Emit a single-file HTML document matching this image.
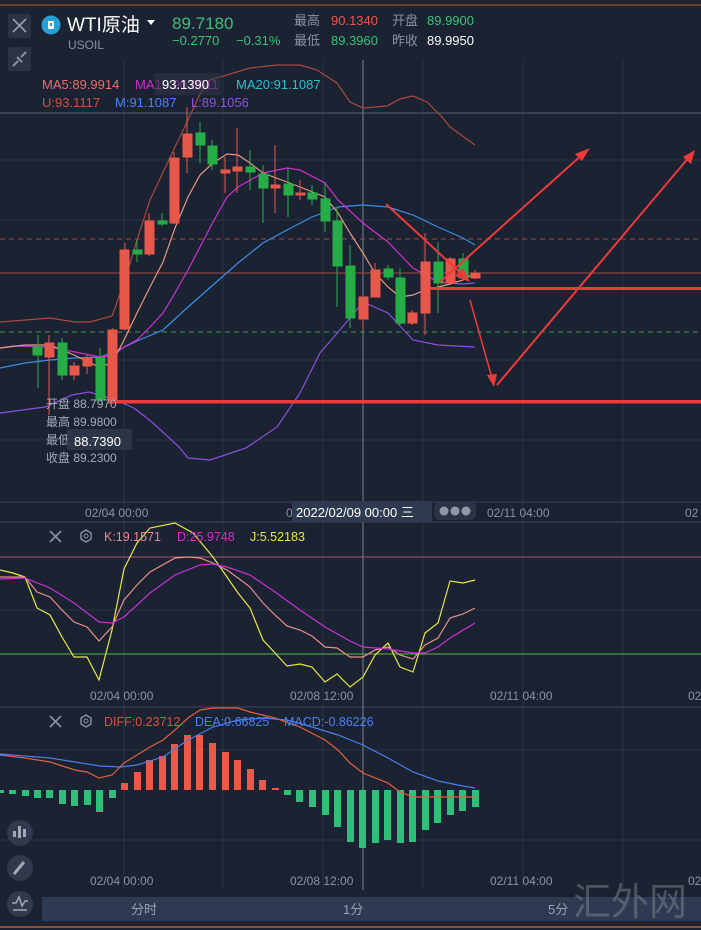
<!DOCTYPE html>
<html><head><meta charset="utf-8"><style>
html,body{margin:0;padding:0;background:#1b2232;}
body{width:701px;height:930px;overflow:hidden;position:relative;font-family:"Liberation Sans","Noto Sans CJK SC",sans-serif;}
svg{position:absolute;left:0;top:0;}
text{font-family:"Liberation Sans","Noto Sans CJK SC",sans-serif;}
</style></head><body>
<svg width="701" height="930" viewBox="0 0 701 930" xmlns="http://www.w3.org/2000/svg">
<rect width="701" height="930" fill="#1b2232"/>
<line x1="0" y1="5" x2="701" y2="5" stroke="#b8602e" stroke-width="1"/>
<line x1="0" y1="927" x2="701" y2="927" stroke="#b8602e" stroke-width="1.5"/>
<g stroke="#2a3446" stroke-width="1">
<line x1="124" y1="60" x2="124" y2="890"/><line x1="223" y1="60" x2="223" y2="890"/>
<line x1="323" y1="60" x2="323" y2="890"/><line x1="423" y1="60" x2="423" y2="890"/>
<line x1="523" y1="60" x2="523" y2="890"/><line x1="623" y1="60" x2="623" y2="890"/>
<line x1="0" y1="160" x2="701" y2="160"/><line x1="0" y1="220" x2="701" y2="220"/>
<line x1="0" y1="360" x2="701" y2="360"/><line x1="0" y1="440" x2="701" y2="440"/>
<line x1="0" y1="610" x2="701" y2="610"/><line x1="0" y1="750" x2="701" y2="750"/><line x1="0" y1="840" x2="701" y2="840"/>
</g>
<line x1="0" y1="113" x2="701" y2="113" stroke="#56607a" stroke-width="1"/>
<line x1="0" y1="502" x2="701" y2="502" stroke="#3a4458"/>
<line x1="0" y1="522" x2="701" y2="522" stroke="#3e4860"/>
<line x1="0" y1="707" x2="701" y2="707" stroke="#3e4860"/>
<line x1="363" y1="60" x2="363" y2="890" stroke="#7a8294" stroke-width="1"/>
<line x1="0" y1="239" x2="701" y2="239" stroke="#a04a44" stroke-dasharray="5,4"/>
<line x1="0" y1="332" x2="701" y2="332" stroke="#3e9a5a" stroke-dasharray="5,4"/>
<line x1="0" y1="273" x2="701" y2="273" stroke="#a04a44"/>
<g fill="none" stroke-width="1.2">
<polyline stroke="#a84a40" points="0,322 25,320 50,318 75,322 90,322 112,316 124,283 137,240 150,200 175,147 188,120 200,94 210,80 250,68 277,65 300,65 317,70 337,83 350,102 363,108 387,106 400,99 413,96 427,102 443,118 450,127 475,145"/>
<polyline stroke="#8a50e0" points="0,413 45,407 72,395 89,392 116,400 134,408 152,422 179,447 188,458 210,460 246,448 277,427 300,393 320,353 340,330 363,302 388,313 413,340 438,345 475,347"/>
<polyline stroke="#3a8ee4" points="0,368 25,363 50,360 75,358 100,357 112,353 137,341 163,330 188,307 213,285 238,263 263,243 287,230 312,217 338,207 363,205 388,207 413,215 438,227 463,238 475,245"/>
<polyline stroke="#d030d0" points="0,348 13,346 50,347 75,352 100,357 112,356 124,347 137,340 150,327 163,313 175,293 188,270 200,247 213,222 227,197 238,187 263,173 287,168 300,170 325,183 338,200 363,223 388,242 413,268 438,282 463,284 475,283"/>
<polyline stroke="#e69a80" points="0,348 25,345 50,345 74,355 99,367 112,363 124,340 137,313 150,287 163,262 175,228 188,197 200,175 213,163 227,154 238,155 250,163 263,173 287,182 300,187 325,197 338,213 350,233 363,253 375,273 388,287 400,297 413,295 425,290 438,287 450,284 463,280 475,273"/>
</g>
<g>
<g stroke="#e8584a" fill="#e8584a">
<line x1="49" y1="335" x2="49" y2="415"/><rect x="45" y="343" width="9" height="14"/>
<line x1="74" y1="362" x2="74" y2="380"/><rect x="70" y="366" width="9" height="9"/>
<line x1="87" y1="355" x2="87" y2="374"/><rect x="83" y="358" width="9" height="8"/>
<line x1="113" y1="328" x2="113" y2="402"/><rect x="108" y="330" width="9" height="70"/>
<line x1="125" y1="243" x2="125" y2="330"/><rect x="120" y="250" width="9" height="79"/>
<line x1="149" y1="213" x2="149" y2="256"/><rect x="145" y="221" width="9" height="33"/>
<line x1="174" y1="152" x2="174" y2="224"/><rect x="170" y="158" width="9" height="65"/>
<line x1="187" y1="107" x2="187" y2="173"/><rect x="183" y="134" width="9" height="23"/>
<line x1="225" y1="157" x2="225" y2="193"/><rect x="221" y="170" width="9" height="3"/>
<line x1="237" y1="128" x2="237" y2="193"/><rect x="233" y="167" width="9" height="4"/>
<line x1="275" y1="145" x2="275" y2="213"/><rect x="271" y="185" width="9" height="3"/>
<line x1="300" y1="180" x2="300" y2="200"/><rect x="296" y="193" width="9" height="2"/>
<line x1="363" y1="297" x2="363" y2="330"/><rect x="359" y="297" width="9" height="22"/>
<line x1="375" y1="263" x2="375" y2="297"/><rect x="371" y="270" width="9" height="27"/>
<line x1="412" y1="310" x2="412" y2="325"/><rect x="408" y="313" width="9" height="10"/>
<line x1="425" y1="233" x2="425" y2="335"/><rect x="421" y="262" width="9" height="51"/>
<line x1="450" y1="257" x2="450" y2="285"/><rect x="446" y="259" width="9" height="24"/>
<line x1="475" y1="270" x2="475" y2="279"/><rect x="471" y="273" width="9" height="5"/>
</g>
<g stroke="#26ad48" fill="#26ad48">
<line x1="38" y1="335" x2="38" y2="388"/><rect x="33" y="347" width="9" height="8"/>
<line x1="62" y1="338" x2="62" y2="380"/><rect x="58" y="343" width="9" height="32"/>
<line x1="100" y1="348" x2="100" y2="402"/><rect x="96" y="358" width="9" height="42"/>
<line x1="137" y1="240" x2="137" y2="262"/><rect x="133" y="250" width="9" height="4"/>
<line x1="162" y1="213" x2="162" y2="226"/><rect x="158" y="221" width="9" height="3"/>
<line x1="200" y1="122" x2="200" y2="163"/><rect x="196" y="133" width="9" height="12"/>
<line x1="212" y1="140" x2="212" y2="170"/><rect x="208" y="146" width="9" height="18"/>
<line x1="250" y1="150" x2="250" y2="190"/><rect x="246" y="167" width="9" height="5"/>
<line x1="263" y1="165" x2="263" y2="223"/><rect x="259" y="174" width="9" height="14"/>
<line x1="288" y1="168" x2="288" y2="217"/><rect x="284" y="184" width="9" height="11"/>
<line x1="312" y1="185" x2="312" y2="205"/><rect x="308" y="193" width="9" height="6"/>
<line x1="325" y1="182" x2="325" y2="232"/><rect x="321" y="199" width="9" height="22"/>
<line x1="337" y1="207" x2="337" y2="307"/><rect x="333" y="221" width="9" height="45"/>
<line x1="350" y1="245" x2="350" y2="328"/><rect x="346" y="266" width="9" height="52"/>
<line x1="388" y1="265" x2="388" y2="280"/><rect x="384" y="269" width="9" height="8"/>
<line x1="400" y1="268" x2="400" y2="325"/><rect x="396" y="278" width="9" height="45"/>
<line x1="438" y1="242" x2="438" y2="313"/><rect x="434" y="262" width="9" height="21"/>
<line x1="463" y1="253" x2="463" y2="280"/><rect x="459" y="259" width="9" height="19"/>
</g>
</g>
<g stroke="#ee3a3a" fill="#ee3a3a">
<rect x="430" y="287" width="271" height="3" stroke="none"/>
<rect x="108" y="400" width="593" height="3.5" stroke="none"/>
<line x1="386" y1="204" x2="466" y2="278" stroke-width="2"/><polygon points="470,282 455,276 463,268" stroke="none"/>
<line x1="440" y1="282" x2="584" y2="153" stroke-width="2"/><polygon points="590,148 582,161 575,154" stroke="none"/>
<line x1="470" y1="300" x2="492" y2="378" stroke-width="1.5"/><polygon points="494,387 487,375 497,374" stroke="none"/>
<line x1="497" y1="385" x2="690" y2="156" stroke-width="2"/><polygon points="695,150 691,164 683,157" stroke="none"/>
</g>
<line x1="0" y1="557" x2="701" y2="557" stroke="#a85a72" stroke-width="1"/>
<line x1="0" y1="654" x2="701" y2="654" stroke="#58b848" stroke-width="1"/>
<g fill="none" stroke-width="1.2">
<polyline stroke="#e8e840" points="0,570 13,573 25,577 37,608 50,615 62,637 74,657 87,657 99,680 112,630 124,569 137,543 150,528 175,523 193,533 213,557 227,577 238,593 250,608 263,640 275,653 287,666 300,664 312,667 325,682 337,674 350,687 363,677 375,655 388,643 400,667 413,672 425,633 438,623 450,581 463,583 475,580"/>
<polyline stroke="#e8908a" points="0,577 25,577 37,592 50,597 62,610 74,622 87,627 99,641 112,627 124,600 137,585 150,572 175,558 188,557 200,558 213,563 227,570 238,578 250,587 263,603 275,615 287,626 300,630 312,636 325,647 337,648 350,657 363,657 375,650 388,647 400,655 413,659 425,645 438,638 450,618 463,614 475,608"/>
<polyline stroke="#c832d8" points="0,579 25,578 50,588 74,603 99,622 112,623 124,617 150,593 175,575 200,565 213,564 227,567 250,575 275,592 300,610 325,627 350,641 363,647 388,649 413,653 425,653 438,647 450,638 475,623"/>
</g>
<g fill="#2fbf7a">
<rect x="-2" y="790" width="6" height="3"/><rect x="9" y="790" width="7" height="4"/><rect x="22" y="790" width="7" height="6"/><rect x="34" y="790" width="7" height="8"/><rect x="46" y="790" width="7" height="8"/><rect x="59" y="790" width="7" height="14"/><rect x="71" y="790" width="7" height="16"/><rect x="84" y="790" width="7" height="15"/><rect x="96" y="790" width="7" height="22"/><rect x="109" y="790" width="7" height="8"/>
<rect x="284" y="790" width="7" height="5"/><rect x="296" y="790" width="7" height="12"/><rect x="309" y="790" width="7" height="17"/><rect x="322" y="790" width="7" height="25"/><rect x="334" y="790" width="7" height="37"/><rect x="347" y="790" width="7" height="52"/><rect x="359" y="790" width="7" height="58"/><rect x="372" y="790" width="7" height="53"/><rect x="384" y="790" width="7" height="50"/><rect x="397" y="790" width="7" height="53"/><rect x="409" y="790" width="7" height="52"/><rect x="422" y="790" width="7" height="40"/><rect x="434" y="790" width="7" height="33"/><rect x="447" y="790" width="7" height="25"/><rect x="459" y="790" width="7" height="21"/><rect x="472" y="790" width="7" height="17"/>
</g>
<g fill="#ee5848">
<rect x="121" y="783" width="7" height="7"/><rect x="134" y="772" width="7" height="18"/><rect x="146" y="760" width="7" height="30"/><rect x="159" y="756" width="7" height="34"/><rect x="171" y="744" width="7" height="46"/><rect x="184" y="735" width="7" height="55"/><rect x="196" y="735" width="7" height="55"/><rect x="209" y="743" width="7" height="47"/><rect x="222" y="752" width="7" height="38"/><rect x="234" y="760" width="7" height="30"/><rect x="247" y="769" width="7" height="21"/><rect x="259" y="780" width="7" height="10"/><rect x="272" y="788" width="7" height="2"/>
</g>
<g fill="none" stroke-width="1.2">
<polyline stroke="#e0603e" points="0,755 25,758 50,762 75,770 87,772 99,778 112,775 124,763 137,755 150,747 163,740 175,730 188,718 200,710 213,708 238,708 250,712 275,718 300,727 325,740 338,750 350,763 363,773 388,783 400,792 413,797 475,797"/>
<polyline stroke="#4a7ee8" points="0,754 50,758 75,762 100,766 121,767 137,765 163,757 188,740 213,727 238,720 263,718 287,720 312,727 338,735 363,745 388,758 413,772 438,781 463,786 475,788"/>
</g>
<rect x="8" y="14" width="23" height="24" rx="2" fill="#2b3445"/>
<path d="M13 19 L26 32 M26 19 L13 32" stroke="#98a0ae" stroke-width="1.6"/>
<rect x="8" y="47" width="23" height="24" rx="2" fill="#2b3445"/>
<path d="M13 66 L18 61 M26 52 L21 57 M17 57 L22 62" stroke="#8a92a0" stroke-width="2"/>
<circle cx="51" cy="25" r="9.5" fill="#26a0d4"/>
<rect x="48" y="21" width="6" height="8" rx="1" fill="#fff"/><rect x="50" y="23" width="2" height="3" fill="#26a0d4"/>
<text x="67" y="31" font-size="19" fill="#ffffff">WTI原油</text>
<path d="M147 20 L155 20 L151 25 Z" fill="#ffffff"/>
<text x="68" y="49" font-size="12" fill="#8a93a4">USOIL</text>
<text x="172" y="29" font-size="17" fill="#3cc07a">89.7180</text>
<text x="172" y="45" font-size="13" fill="#3cc07a">−0.2770</text>
<text x="236" y="45" font-size="13" fill="#3cc07a">−0.31%</text>
<g font-size="13">
<text x="294" y="25" fill="#8a93a4">最高</text><text x="331" y="25" fill="#e8584a">90.1340</text>
<text x="392" y="25" fill="#8a93a4">开盘</text><text x="427" y="25" fill="#3cc07a">89.9900</text>
<text x="294" y="45" fill="#8a93a4">最低</text><text x="331" y="45" fill="#3cc07a">89.3960</text>
<text x="392" y="45" fill="#8a93a4">昨收</text><text x="427" y="45" fill="#ffffff">89.9950</text>
</g>
<g font-size="13">
<text x="42" y="89" fill="#e8706a">MA5:89.9914</text>
<text x="135" y="89" fill="#d030d0">MA10:90.0011</text>
<rect x="155" y="73" width="66" height="22" fill="#2e3748" opacity="0.55"/>
<text x="162" y="89" fill="#ffffff">93.1390</text>
<text x="236" y="89" fill="#2cc0cc">MA20:91.1087</text>
<text x="42" y="107" fill="#d84e3e">U:93.1117</text>
<text x="115" y="107" fill="#4a80f0">M:91.1087</text>
<text x="191" y="107" fill="#9050e0">L:89.1056</text>
</g>
<g font-size="12" fill="#a4acba">
<text x="46" y="408">开盘 88.7970</text>
<text x="46" y="426">最高 89.9800</text>
<text x="46" y="444">最低 88.4390</text>
<text x="46" y="462">收盘 89.2300</text>
</g>
<rect x="67" y="429" width="65" height="21" fill="#2e3748" opacity="0.9"/>
<text x="74" y="446" font-size="13" fill="#ffffff">88.7390</text>
<g font-size="12" fill="#8a93a4">
<text x="85" y="517">02/04 00:00</text>
<text x="286" y="517">0</text>
<text x="487" y="517">02/11 04:00</text>
<text x="685" y="517">02</text>
</g>
<rect x="292" y="501" width="140" height="21" fill="#2e3a50"/>
<text x="296" y="517" font-size="13" fill="#ffffff">2022/02/09 00:00 三</text>
<rect x="434" y="502" width="42" height="18" rx="6" fill="#2b3446"/>
<circle cx="444" cy="511" r="4.5" fill="#9098a6"/><circle cx="455" cy="511" r="4.5" fill="#9098a6"/><circle cx="466" cy="511" r="4.5" fill="#9098a6"/>
<path d="M50 531 L61 542 M61 531 L50 542" stroke="#8a92a0" stroke-width="1.6"/>
<polygon points="86,530 91,533 91,539 86,542 81,539 81,533" fill="none" stroke="#8a92a0" stroke-width="1.4"/><circle cx="86" cy="536" r="2" fill="none" stroke="#8a92a0"/>
<g font-size="12.5">
<text x="104" y="541" fill="#e8889a">K:19.1571</text>
<text x="177" y="541" fill="#d030d0">D:25.9748</text>
<text x="250" y="541" fill="#e8e840">J:5.52183</text>
</g>
<g font-size="12" fill="#8a93a4">
<text x="90" y="700">02/04 00:00</text><text x="290" y="700">02/08 12:00</text><text x="490" y="700">02/11 04:00</text><text x="688" y="700">02</text>
</g>
<path d="M50 716 L61 727 M61 716 L50 727" stroke="#8a92a0" stroke-width="1.6"/>
<polygon points="86,715 91,718 91,724 86,727 81,724 81,718" fill="none" stroke="#8a92a0" stroke-width="1.4"/><circle cx="86" cy="721" r="2" fill="none" stroke="#8a92a0"/>
<g font-size="12.5">
<text x="104" y="726" fill="#e0503e">DIFF:0.23712</text>
<text x="195" y="726" fill="#4a80f0">DEA:0.66825</text>
<text x="284" y="726" fill="#4a80f0">MACD:-0.86226</text>
</g>
<g font-size="12" fill="#8a93a4">
<text x="90" y="885">02/04 00:00</text><text x="290" y="885">02/08 12:00</text><text x="490" y="885">02/11 04:00</text><text x="688" y="885">02</text>
</g>
<circle cx="20" cy="833" r="13" fill="#303a4c"/>
<g fill="#a0a8b6"><rect x="13" y="831" width="3" height="6"/><rect x="18" y="826" width="3" height="12"/><rect x="23" y="829" width="3" height="8"/></g>
<circle cx="20" cy="868" r="13" fill="#303a4c"/>
<path d="M14 874 L24 862" stroke="#a0a8b6" stroke-width="3"/>
<circle cx="20" cy="904" r="13" fill="#303a4c"/>
<path d="M12 903 L16 903 L19 897 L22 906 L25 901 L28 901 M13 910 L27 910" stroke="#a0a8b6" stroke-width="1.5" fill="none"/>
<rect x="42" y="897" width="659" height="24" fill="#2e3a52"/>
<g font-size="13" fill="#9aa2b2">
<text x="131" y="914">分时</text><text x="343" y="914">1分</text><text x="548" y="914">5分</text>
</g>
<text x="573" y="915" font-size="38" fill="#8a8e96" opacity="0.45" font-family="'Noto Serif CJK SC',serif">汇外网</text>
</svg>
</body></html>
